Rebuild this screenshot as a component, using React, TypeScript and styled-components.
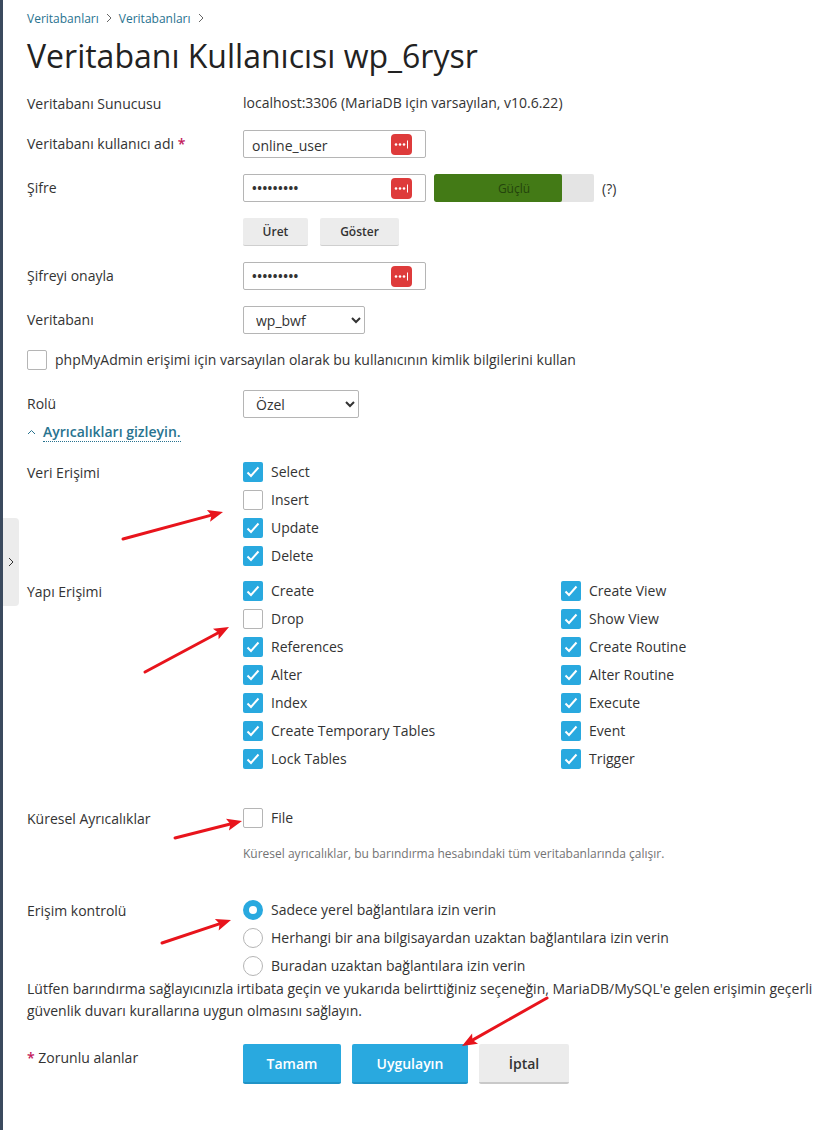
import React from "react";
import styled, { createGlobalStyle } from "styled-components";

const Global = createGlobalStyle`
  html, body { margin: 0; padding: 0; background: #fff; }
  body { font-family: "Open Sans", "Noto Sans", sans-serif; font-size: 14px; color: #333; }
`;

const Page = styled.div`
  position: relative;
  width: 830px;
  height: 1130px;
  box-sizing: border-box;
  overflow: hidden;
  border-left: 3px solid #3b4a5e;
  padding: 9px 0 0 24px;
`;
const SideTab = styled.div`
  position: absolute;
  left: 0;
  top: 518px;
  width: 16px;
  height: 88px;
  background: #ececec;
  border-radius: 0 4px 4px 0;
  display: flex;
  align-items: center;
  justify-content: center;
`;
const Overlay = styled.svg`
  position: absolute;
  left: -3px;
  top: 0;
  pointer-events: none;
`;
const Crumbs = styled.nav`
  display: flex;
  align-items: center;
  gap: 7px;
  height: 18px;
  font-size: 12px;
  color: #28738f;
`;
const Title = styled.h1`
  margin: 9px 0 0;
  font-size: 32px;
  line-height: 40px;
  font-weight: 400;
  color: #222;
`;
const Row = styled.div<{ $top: number }>`
  display: grid;
  grid-template-columns: 216px 1fr;
  margin-top: ${(p) => p.$top}px;
  align-items: start;
`;
const Label = styled.div<{ $pt?: number }>`
  line-height: 20px;
  padding-top: ${(p) => p.$pt ?? 0}px;
  color: #333;
`;
const Value = styled.div`
  line-height: 20px;
`;
const Star = styled.span`
  color: #c2185b;
  font-weight: 600;
`;
const Controls = styled.div<{ $gap?: number }>`
  display: flex;
  align-items: flex-start;
  gap: ${(p) => p.$gap ?? 8}px;
`;
const InputBox = styled.div`
  width: 183px;
  height: 28px;
  box-sizing: border-box;
  border: 1px solid #b5b5b5;
  border-radius: 2px;
  display: flex;
  align-items: center;
  justify-content: space-between;
  padding: 0 13px 0 8px;
  color: #333;
`;
const InputText = styled.span`
  margin-top: 2px;
`;
const Dots = styled.span`
  font-size: 12.5px;
  letter-spacing: 0.5px;
  font-weight: 700;
  color: #333;
`;
const Meter = styled.div`
  position: relative;
  width: 160px;
  height: 28px;
  border-radius: 2px;
  background: #e4e4e4;
  overflow: hidden;
  display: flex;
  align-items: center;
  justify-content: center;
`;
const MeterFill = styled.div`
  position: absolute;
  left: 0;
  top: 0;
  bottom: 0;
  border-radius: 2px;
  background: #437a16;
`;
const MeterLabel = styled.span`
  position: relative;
  color: #24440c;
  font-size: 12px;
`;
const Hint = styled.span`
  margin-top: 5px;
  line-height: 20px;
`;
const SmallButton = styled.button<{ $w: number }>`
  height: 28px;
  padding: 0;
  width: ${(p) => p.$w}px;
  border: 0;
  border-bottom: 1px solid #cfcfcf;
  border-radius: 2px;
  background: #ececec;
  font: 600 12px "Open Sans", sans-serif;
  color: #333;
`;
const Select = styled.select<{ $w: number }>`
  width: ${(p) => p.$w}px;
  height: 28px;
  box-sizing: border-box;
  border: 1px solid #b5b5b5;
  border-radius: 2px;
  background: #fff;
  padding-left: 8px;
  font: 14px "Open Sans", sans-serif;
  color: #333;
`;
const Check = styled.span<{ $on?: boolean }>`
  width: 20px;
  height: 20px;
  flex: none;
  box-sizing: border-box;
  border-radius: 2px;
  border: ${(p) => (p.$on ? "0" : "1px solid #b5b5b5")};
  background: ${(p) => (p.$on ? "#29a9df" : "#fff")};
  display: flex;
  align-items: center;
  justify-content: center;
`;
const Radio = styled.span<{ $on?: boolean }>`
  width: 20px;
  height: 20px;
  flex: none;
  box-sizing: border-box;
  border-radius: 50%;
  border: ${(p) => (p.$on ? "6px solid #29a9df" : "1px solid #b5b5b5")};
  background: #fff;
`;
const OptionRow = styled.div<{ $top?: number }>`
  height: 20px;
  margin-top: ${(p) => p.$top ?? 0}px;
  display: flex;
  align-items: center;
  gap: 8px;
  line-height: 20px;
  color: #333;
`;
const OptionList = styled.div`
  display: flex;
  flex-direction: column;
  gap: 8px;
`;
const TwoCols = styled.div`
  display: grid;
  grid-template-columns: 318px 1fr;
`;
const Toggle = styled.div`
  margin-top: 4px;
  height: 20px;
  display: flex;
  align-items: center;
  gap: 7px;
`;
const ToggleLink = styled.span`
  font-weight: 600;
  color: #28738f;
  border-bottom: 1px dotted #28738f;
  line-height: 18px;
`;
const HelpText = styled.div`
  margin-top: 16px;
  font-size: 12px;
  line-height: 20px;
  color: #737373;
`;
const Notice = styled.p`
  margin: 2px 0 0;
  width: 790px;
  line-height: 22px;
  color: #333;
`;
const ActionBar = styled.div`
  display: flex;
  gap: 11px;
`;
const ActionButton = styled.button<{ $w: number; $primary?: boolean }>`
  width: ${(p) => p.$w}px;
  height: 40px;
  padding: 0;
  border: 0;
  border-radius: 2px;
  border-bottom: 2px solid ${(p) => (p.$primary ? "#2093c6" : "#c9c9c9")};
  background: ${(p) => (p.$primary ? "#29a9df" : "#ececec")};
  color: ${(p) => (p.$primary ? "#fff" : "#333")};
  font: 600 14px "Open Sans", sans-serif;
`;

const Pass = () => (
  <svg width="21" height="21" viewBox="0 0 21 21">
    <rect width="21" height="21" rx="4" fill="#de3b3b" />
    <circle cx="5" cy="10.5" r="1.3" fill="#fff" />
    <circle cx="9" cy="10.5" r="1.3" fill="#fff" />
    <circle cx="13" cy="10.5" r="1.3" fill="#fff" />
    <rect x="16" y="6.5" width="1" height="8" fill="#fff" />
  </svg>
);
const Tick = () => (
  <svg width="14" height="12" viewBox="0 0 14 12">
    <path d="M1.5 6.5 L5 10 L12.5 1.5" fill="none" stroke="#fff" strokeWidth="2" />
  </svg>
);
const Chevron = ({ d, w = 6, h = 10, c = "#666" }: { d: string; w?: number; h?: number; c?: string }) => (
  <svg width={w} height={h} viewBox={`0 0 ${w} ${h}`}>
    <path d={d} fill="none" stroke={c} strokeWidth="1" />
  </svg>
);
const Opt = ({ on, children }: { on?: boolean; children: React.ReactNode }) => (
  <OptionRow>
    <Check $on={on}>{on && <Tick />}</Check>
    {children}
  </OptionRow>
);
const RadioOpt = ({ on, children }: { on?: boolean; children: React.ReactNode }) => (
  <OptionRow>
    <Radio $on={on} />
    {children}
  </OptionRow>
);

const arrows = [
  [123, 539, 223, 512],
  [145, 672, 229, 627],
  [175, 838, 242, 821],
  [162, 943, 231, 920],
  [547, 998, 462, 1046],
];
const Arrow = ({ a }: { a: number[] }) => {
  const [x1, y1, x2, y2] = a;
  const ang = (Math.atan2(y2 - y1, x2 - x1) * 180) / Math.PI;
  const len = Math.hypot(x2 - x1, y2 - y1);
  return (
    <g transform={`translate(${x1} ${y1}) rotate(${ang})`}>
      <line x1="0" y1="0" x2={len - 10} y2="0" stroke="#e8141c" strokeWidth="3" strokeLinecap="round" />
      <path d={`M${len} 0 L${len - 15} -6 L${len - 12} 0 L${len - 15} 6 Z`} fill="#e8141c" />
    </g>
  );
};

export default function App() {
  return (
    <>
      <Global />
      <Page>
        <SideTab>
          <Chevron d="M1 1 L5 5 L1 9" c="#333" />
        </SideTab>
        <Crumbs>
          <span>Veritabanları</span>
          <Chevron d="M1 1 L5 5 L1 9" />
          <span>Veritabanları</span>
          <Chevron d="M1 1 L5 5 L1 9" />
        </Crumbs>
        <Title>Veritabanı Kullanıcısı wp_6rysr</Title>
        <Row $top={17}>
          <Label $pt={1}>Veritabanı Sunucusu</Label>
          <Value>localhost:3306 (MariaDB için varsayılan, v10.6.22)</Value>
        </Row>
        <Row $top={16}>
          <Label $pt={4}>
            Veritabanı kullanıcı adı <Star>*</Star>
          </Label>
          <Controls>
            <InputBox>
              <InputText>online_user</InputText>
              <Pass />
            </InputBox>
          </Controls>
        </Row>
        <Row $top={16}>
          <Label $pt={4}>Şifre</Label>
          <Controls>
            <InputBox>
              <Dots>•••••••••</Dots>
              <Pass />
            </InputBox>
            <Meter>
              <MeterFill style={{ width: "80%" }} />
              <MeterLabel>Güçlü</MeterLabel>
            </Meter>
            <Hint>(?)</Hint>
          </Controls>
        </Row>
        <Row $top={16}>
          <div />
          <Controls $gap={12}>
            <SmallButton $w={65}>Üret</SmallButton>
            <SmallButton $w={79}>Göster</SmallButton>
          </Controls>
        </Row>
        <Row $top={16}>
          <Label $pt={4}>Şifreyi onayla</Label>
          <InputBox>
            <Dots>•••••••••</Dots>
            <Pass />
          </InputBox>
        </Row>
        <Row $top={16}>
          <Label $pt={4}>Veritabanı</Label>
          <Select $w={122} defaultValue="wp_bwf">
            <option>wp_bwf</option>
          </Select>
        </Row>
        <OptionRow $top={16}>
          <Check />
          phpMyAdmin erişimi için varsayılan olarak bu kullanıcının kimlik bilgilerini kullan
        </OptionRow>
        <Row $top={20}>
          <Label $pt={4}>Rolü</Label>
          <Select $w={116} defaultValue="Özel">
            <option>Özel</option>
          </Select>
        </Row>
        <Toggle>
          <Chevron w={9} h={6} d="M1 5 L4.5 1.5 L8 5" c="#28738f" />
          <ToggleLink>Ayrıcalıkları gizleyin.</ToggleLink>
        </Toggle>
        <Row $top={20}>
          <Label $pt={1}>Veri Erişimi</Label>
          <OptionList>
            <Opt on>Select</Opt>
            <Opt>Insert</Opt>
            <Opt on>Update</Opt>
            <Opt on>Delete</Opt>
          </OptionList>
        </Row>
        <Row $top={15}>
          <Label $pt={1}>Yapı Erişimi</Label>
          <TwoCols>
            <OptionList>
              <Opt on>Create</Opt>
              <Opt>Drop</Opt>
              <Opt on>References</Opt>
              <Opt on>Alter</Opt>
              <Opt on>Index</Opt>
              <Opt on>Create Temporary Tables</Opt>
              <Opt on>Lock Tables</Opt>
            </OptionList>
            <OptionList>
              <Opt on>Create View</Opt>
              <Opt on>Show View</Opt>
              <Opt on>Create Routine</Opt>
              <Opt on>Alter Routine</Opt>
              <Opt on>Execute</Opt>
              <Opt on>Event</Opt>
              <Opt on>Trigger</Opt>
            </OptionList>
          </TwoCols>
        </Row>
        <Row $top={39}>
          <Label $pt={1}>Küresel Ayrıcalıklar</Label>
          <div>
            <Opt>File</Opt>
            <HelpText>Küresel ayrıcalıklar, bu barındırma hesabındaki tüm veritabanlarında çalışır.</HelpText>
          </div>
        </Row>
        <Row $top={36}>
          <Label $pt={1}>Erişim kontrolü</Label>
          <OptionList>
            <RadioOpt on>Sadece yerel bağlantılara izin verin</RadioOpt>
            <RadioOpt>Herhangi bir ana bilgisayardan uzaktan bağlantılara izin verin</RadioOpt>
            <RadioOpt>Buradan uzaktan bağlantılara izin verin</RadioOpt>
          </OptionList>
        </Row>
        <Notice>
          Lütfen barındırma sağlayıcınızla irtibata geçin ve yukarıda belirttiğiniz seçeneğin, MariaDB/MySQL'e gelen erişimin geçerli güvenlik duvarı kurallarına uygun olmasını sağlayın.
        </Notice>
        <Row $top={22}>
          <Label $pt={4}>
            <Star>*</Star> Zorunlu alanlar
          </Label>
          <ActionBar>
            <ActionButton $w={98} $primary>Tamam</ActionButton>
            <ActionButton $w={116} $primary>Uygulayın</ActionButton>
            <ActionButton $w={90}>İptal</ActionButton>
          </ActionBar>
        </Row>
        <Overlay width="830" height="1130" viewBox="0 0 830 1130">
          {arrows.map((a) => (
            <Arrow key={a.join()} a={a} />
          ))}
        </Overlay>
      </Page>
    </>
  );
}
